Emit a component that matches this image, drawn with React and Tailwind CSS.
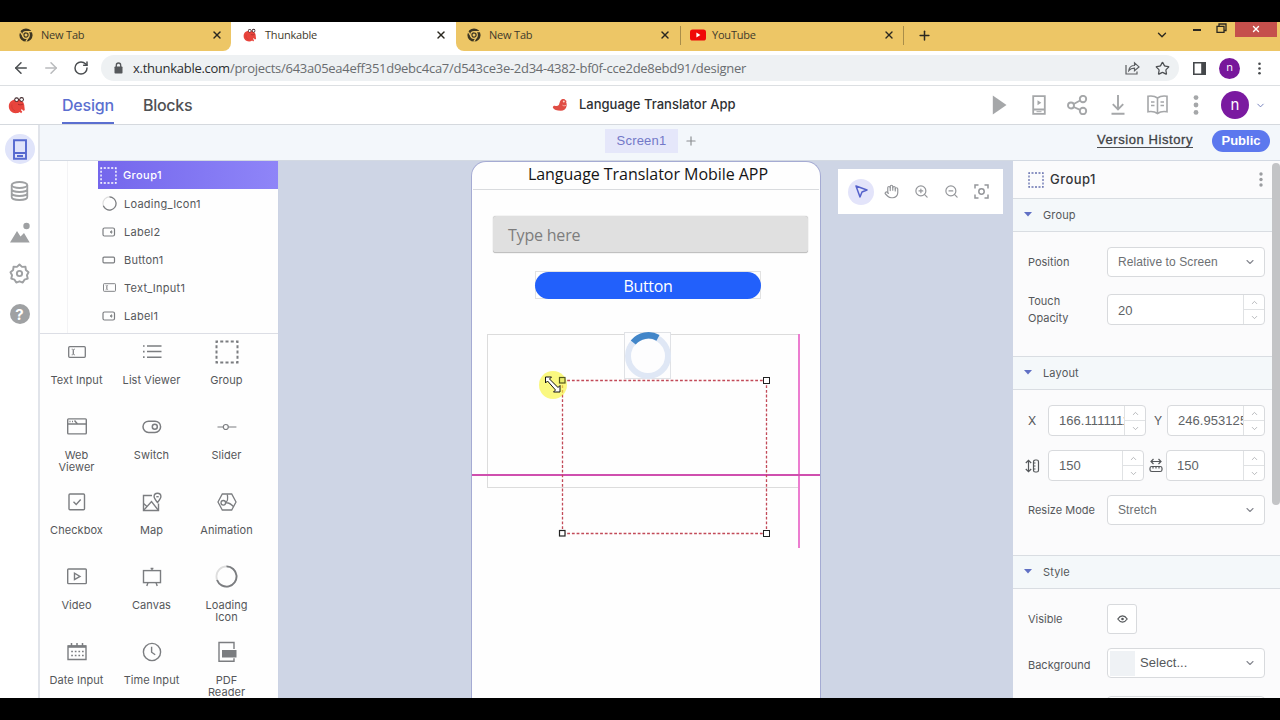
import React from 'react';
import {
  ArrowLeft, ArrowRight, RotateCw, X, Plus, ChevronDown, ChevronUp, Star,
  ZoomIn, ZoomOut, Hand,
} from 'lucide-react';

function Svg({ w, h, box, className = '', children, sw = 1.3 }) {
  return (
    <svg width={w} height={h} viewBox={box || `0 0 ${w} ${h}`} fill="none" stroke="currentColor" strokeWidth={sw} className={`shrink-0 ${className}`}>
      {children}
    </svg>
  );
}

/* ---------- logos ---------- */
const ChromeLogo = () => (
  <Svg w={14} h={14} sw={1.2} className="text-[#3d3622]">
    <circle cx="7" cy="7" r="6.6" fill="currentColor" stroke="none" />
    <circle cx="7" cy="7" r="3.3" stroke="#edc666" />
    <circle cx="7" cy="7" r="1.5" fill="#edc666" stroke="none" />
    <path d="M7 3.7H13M4.2 8.7L1.2 3.6M9.8 8.7L6.8 13.6" stroke="#edc666" />
  </Svg>
);

const Beaver = ({ size }) => (
  <Svg w={size} h={size} box="0 0 18 18">
    <path d="M9 3.2C4 3.2.8 6.2.8 10.2c0 4 3 7 7 7 1.600 0 3-.4 4-1.200l1.300 1.200 1.200-1.400-1.300-1.600.8-1.200 1.400 1.800 1.600-.6-.4-3.400c.2-4.200-2.600-7.600-7.400-7.600z" fill="#e8443c" stroke="none" />
    <path d="M4 8.500c-.8 2.800.6 5.500 3 6.300" stroke="#d63a35" strokeWidth="1" />
    <circle cx="8.600" cy="3.600" r="2.300" fill="#3b2226" stroke="none" />
    <circle cx="13.600" cy="3.400" r="2.300" fill="#3b2226" stroke="none" />
    <circle cx="8.600" cy="3.800" r="1.400" fill="#fff" stroke="none" />
    <circle cx="13.600" cy="3.600" r="1.400" fill="#fff" stroke="none" />
    <path d="M10 8.200c1.600.8 3.600.8 5-.2" stroke="#a12a2b" strokeWidth=".9" />
  </Svg>
);

const AppLogo = () => (
  <Svg w={16} h={14}>
    <path d="M8.700 2.200C10 .6 12.800.6 13.500 2.200c1 .3 1.200 1.200.6 2 .6 1 .7 2.400.5 3.700-.4 3-2.800 4.800-5.800 4.800-4 0-7-1.100-8-3.300.2-1.400 1.200-1.900 2.700-1.500 1.400.2 2.500 0 3.300-.8C7.300 6 7.600 4 8.700 2.200z" fill="#e04d44" stroke="none" />
    <circle cx="11.800" cy="3.600" r="1" fill="#fbd3c8" stroke="none" />
    <path d="M10.500 7.200c1.200.8 2.400.8 3.600 0" stroke="#fbd3c8" strokeWidth=".8" />
  </Svg>
);

const YouTube = () => (
  <Svg w={16} h={12}>
    <rect x="0" y=".5" width="16" height="11" rx="2.600" fill="#f00808" stroke="none" />
    <path d="M6.400 3.600v4.800L10.400 6z" fill="#fff" stroke="none" />
  </Svg>
);

/* ---------- component icons ---------- */
const GroupIcon = ({ size = 24, sw = 2 }) => (
  <Svg w={size} h={size} box="0 0 24 24" sw={sw}>
    <rect x="1.500" y="1.500" width="21" height="21" strokeDasharray="3 2.250" strokeDashoffset="1.500" />
  </Svg>
);
const LoadingIcon = ({ size = 23 }) => (
  <Svg w={size} h={size} box="0 0 24 24" sw={1.9}>
    <circle cx="12" cy="12" r="10.500" stroke="#dedede" />
    <path d="M12 1.500A10.500 10.500 0 1 1 2.130 15.600" />
  </Svg>
);
const LabelIcon = () => (
  <Svg w={14} h={10} sw={1.2}>
    <rect x="1" y="1" width="11.500" height="8" rx="1.500" />
    <path d="M9.600 3.600L8 5l1.600 1.400zM9 5h1.800" fill="currentColor" strokeWidth=".6" />
  </Svg>
);
const ButtonIcon = () => (
  <Svg w={14} h={8} sw={1.2}><rect x="1" y="1.200" width="11.500" height="5.600" rx="1" /></Svg>
);
const TextInputIcon = ({ w = 18, h = 12 }) => (
  <Svg w={w} h={h} box="0 0 18 12" sw={1.3}>
    <rect x=".7" y=".7" width="16.600" height="10.600" rx="1" />
    <path d="M3.700 3.200c1 0 1.600.3 1.600.9v3.800c0 .6-.6.900-1.600.9M7 3.200c-1 0-1.700.3-1.700.9v3.800c0 .6.700.9 1.700.9" strokeWidth=".9" />
  </Svg>
);
const ListIcon = () => (
  <Svg w={20} h={16} sw={1.5}>
    <path d="M5 2h14.500M5 7.600h14.500M5 13.200h14.500" />
    <path d="M1 2h1.600M1 7.600h1.600M1 13.200h1.600" strokeWidth="1.700" />
  </Svg>
);
const WebIcon = () => (
  <Svg w={20} h={17} sw={1.4}>
    <rect x=".7" y=".9" width="18.600" height="15" rx=".8" />
    <path d="M.7 6h18.600M7.500 2.500l3 3.500" />
    <path d="M2.500 3.500h1M5 3.500h1" />
  </Svg>
);
const SwitchIcon = () => (
  <Svg w={20} h={14} sw={1.5}>
    <rect x="1" y="1.200" width="17.600" height="11.200" rx="5.600" />
    <circle cx="12.800" cy="6.800" r="2.500" />
  </Svg>
);
const SliderIcon = () => (
  <Svg w={20} h={8} sw={1.2}><path d="M.5 4h5.800M11.400 4h8" /><circle cx="8.800" cy="4" r="2.500" /></Svg>
);
const CheckIcon = () => (
  <Svg w={18} h={18} sw={1.4}><rect x="1" y="1" width="15.500" height="15.800" rx="1" /><path d="M5.500 8.800l2.700 2.700 4.500-5" /></Svg>
);
const MapIcon = () => (
  <Svg w={20} h={20} sw={1.4}>
    <path d="M10 3.500H1.500v15h15v-7" />
    <path d="M1.500 18.500l8-9 7 9M1.500 11.500l3.500 3" />
    <path d="M15.500 10.500c-2-2.400-3.400-4-3.400-5.900a3.400 3.400 0 0 1 6.800 0c0 1.900-1.400 3.500-3.400 5.900z" fill="#fff" />
    <path d="M14.300 4.700h2.400" />
  </Svg>
);
const AnimationIcon = () => (
  <Svg w={20} h={18} sw={1.3}>
    <path d="M5.300 1h9.400L19 9l-4.300 8H5.300L1 9z" />
    <circle cx="6.300" cy="9.800" r="2.300" />
    <path d="M8.500 9.500c2-1 2.600-4 1.800-8M8.500 9.800c3-.3 6 1.500 8.200 4" />
  </Svg>
);
const VideoIcon = () => (
  <Svg w={20} h={17} sw={1.4}><rect x=".7" y="1" width="18.600" height="14.600" rx=".8" /><path d="M7.500 5.200v6.400l5.500-3.200z" /></Svg>
);
const CanvasIcon = () => (
  <Svg w={20} h={20} sw={1.4}>
    <rect x="1.500" y="3.600" width="17" height="12" />
    <path d="M10 3.600V1.200M8.600 1.500h2.800M6 15.600L4.800 19M14 15.600l1.200 3.400" />
  </Svg>
);
const DateIcon = () => (
  <Svg w={20} h={18} sw={1.4}>
    <path d="M1 3h18v13.500H1z" />
    <path d="M1 3.600h18" strokeWidth="2.400" />
    <path d="M4.500 0v3M10 0v3M15.500 0v3" strokeWidth="1.500" />
    <path d="M4.200 8.500h12.500M4.200 12.500h12.500" strokeWidth="1.700" strokeDasharray="1.700 1.900" />
  </Svg>
);
const TimeIcon = () => (
  <Svg w={20} h={20} sw={1.4}><circle cx="10" cy="10" r="8.600" /><path d="M9.600 4.800v5.400l3.600 2.600" /></Svg>
);
const PdfIcon = () => (
  <Svg w={20} h={22} sw={1.4}>
    <path d="M17 8V1.500H2v18.800h15v-3" />
    <rect x="5" y="9" width="14.500" height="7.500" fill="currentColor" stroke="none" />
  </Svg>
);

const COMPONENTS = [
  ['Text Input', <TextInputIcon />], ['List Viewer', <ListIcon />], ['Group', <GroupIcon />],
  ['Web Viewer', <WebIcon />], ['Switch', <SwitchIcon />], ['Slider', <SliderIcon />],
  ['Checkbox', <CheckIcon />], ['Map', <MapIcon />], ['Animation', <AnimationIcon />],
  ['Video', <VideoIcon />], ['Canvas', <CanvasIcon />], ['Loading Icon', <LoadingIcon />],
  ['Date Input', <DateIcon />], ['Time Input', <TimeIcon />], ['PDF Reader', <PdfIcon />],
];

const TREE = [
  ['Loading_Icon1', <LoadingIcon size={15} />],
  ['Label2', <LabelIcon />],
  ['Button1', <ButtonIcon />],
  ['Text_Input1', <TextInputIcon w={13} h={9} />],
  ['Label1', <LabelIcon />],
];

/* ---------- browser chrome ---------- */
function Tab({ icon, title, active, className = '' }) {
  return (
    <div className={`flex h-[29px] shrink-0 items-center pb-[3px] text-[#3f3a2b] ${active ? 'bg-white' : 'bg-[#edc666]'} ${className}`}>
      <span className="flex w-[22px]">{icon}</span>
      <span className="grow text-[11px] leading-4 tracking-[-0.2px]">{title}</span>
      <X size={12} strokeWidth={2.8} className="text-[#2b2820]" />
    </div>
  );
}

function BrowserChrome() {
  return (
    <header className="font-['Open_Sans',sans-serif]">
      <div className="flex h-[29px] items-center bg-white">
        <Tab icon={<ChromeLogo />} title="New Tab" className="w-[231px] rounded-br-lg pl-[19px] pr-[8px]" />
        <Tab icon={<Beaver size={14} />} title="Thunkable" active className="w-[225px] pl-[12px] pr-[9px]" />
        <Tab icon={<ChromeLogo />} title="New Tab" className="w-[224px] rounded-bl-lg pl-[11px] pr-[9px]" />
        <div className="flex h-[29px] items-center bg-[#edc666] pb-[3px]"><div className="h-[19px] w-px bg-[#a98d49]" /></div>
        <Tab icon={<YouTube />} title="YouTube" className="w-[222px] pl-[9px] pr-[8px]" />
        <div className="flex h-[29px] grow items-start bg-[#edc666]">
          <div className="mt-[4px] h-[19px] w-px bg-[#a98d49]" />
          <Plus size={15} strokeWidth={2.400} className="ml-[13px] mt-[6px] text-[#2b2820]" />
          <div className="grow" />
          <ChevronDown size={14} strokeWidth={2.300} className="mt-[6px] text-[#2b2820]" />
          <div className="ml-[24px] mt-[7px] h-[2px] w-[8px] bg-[#2b2820]" />
          <Svg w={11} h={11} className="ml-[15px] mt-px text-[#2b2820]">
            <path d="M1 3.300h7v6H1zM3 3V1h7v6.500H8.500" />
          </Svg>
          <div className="ml-[8px] mr-[3px] flex h-[15px] w-[42px] items-center justify-center bg-[#c5504c]">
            <X size={10} strokeWidth={3.200} className="mb-[2px] text-white" />
          </div>
        </div>
      </div>
      <div className="flex h-[35px] items-center border-b border-[#dcdfe2] bg-white">
        <ArrowLeft size={18} className="ml-[12px] text-[#4a4d50]" />
        <ArrowRight size={18} className="ml-[12px] text-[#b9bbbd]" />
        <RotateCw size={16} strokeWidth={2.200} className="ml-[13px] text-[#4a4d50]" />
        <div className="ml-[12px] flex h-[26px] w-[1078px] items-center rounded-full bg-[#eef1f3] pl-[13px] pr-[9px]">
          <Svg w={9} h={12} className="text-[#55585b]">
            <rect x=".5" y="4.500" width="8" height="7" rx=".8" fill="currentColor" stroke="none" />
            <path d="M2.300 5V3.200a2.200 2.200 0 0 1 4.400 0V5" />
          </Svg>
          <span className="ml-[10px] grow whitespace-nowrap text-[13px] leading-5 tracking-[-0.265px] text-[#6a6d70]">
            <span className="text-[#2c2e30]">x.thunkable.com</span>/projects/643a05ea4eff351d9ebc4ca7/d543ce3e-2d34-4382-bf0f-cce2de8ebd91/designer
          </span>
          <Svg w={15} h={14} sw={1.2} className="mr-[15px] text-[#5c5f62]">
            <path d="M1 4v9h11v-2.500" />
            <path d="M3.800 9.500c.5-3.300 2.500-5 5.700-5V1.800L14 5.900l-4.500 3.900V7.200c-2.500 0-4.300.6-5.700 2.300z" />
          </Svg>
          <Star size={15} strokeWidth={2} className="text-[#4c4f52]" />
        </div>
        <Svg w={13} h={13} sw={1.600} className="ml-[14px] text-[#45484b]">
          <path d="M.8.8h11.400v11.400H.8z" /><path d="M9 .8h3.200v11.400H9z" fill="currentColor" />
        </Svg>
        <div className="ml-[13px] flex size-[21px] items-center justify-center rounded-full bg-[#77179b] pb-px text-[11px] text-white">n</div>
        <Svg w={3} h={13} className="ml-[18px] text-[#45484b]">
          <g fill="currentColor" stroke="none"><circle cx="1.500" cy="1.800" r="1.300" /><circle cx="1.500" cy="6.500" r="1.300" /><circle cx="1.500" cy="11.200" r="1.300" /></g>
        </Svg>
      </div>
    </header>
  );
}

/* ---------- app header ---------- */
const Cell = ({ w, children }) => <div className={`flex shrink-0 items-center justify-center ${w}`}>{children}</div>;

function AppHeader() {
  return (
    <div className="flex h-[39px] items-center border-b border-[#d5d9de] bg-white">
      <div className="ml-[8px] w-[54px]"><Beaver size={18} /></div>
      <div className="flex h-[38px] w-[52px] items-center border-b-2 border-[#5b6fd0] pt-px text-[16px] font-medium tracking-[-0.190px] text-[#5b6fd0]">Design</div>
      <div className="ml-[29px] w-[409px] text-[16px] font-medium tracking-[-0.3px] text-[#4f5154]">Blocks</div>
      <AppLogo />
      <div className="ml-[11px] w-[400px] whitespace-nowrap text-[13px] font-medium text-[#2e3033]">Language Translator App</div>
      <div className="flex items-center text-[#a5a7a9]">
        <Cell w="w-[40px]"><Svg w={15} h={20}><path d="M.8.500v19L14.500 10z" fill="currentColor" stroke="none" /></Svg></Cell>
        <Cell w="w-[40px]"><Svg w={14} h={20} sw={1.800}><path d="M1.200 1.200h11.600v17.600H1.200zM1.200 14.500h11.600" /><path d="M5.500 5.300v5L9.300 7.800z" fill="currentColor" stroke="none" /><path d="M4.500 16.700h5" strokeWidth="1" /></Svg></Cell>
        <Cell w="w-[37px]"><Svg w={21} h={20} sw={1.900}><circle cx="4" cy="10.500" r="3" /><circle cx="16" cy="4" r="3.200" /><circle cx="16" cy="16" r="3.200" /><path d="M6.700 9l6.400-3.500M6.700 12l6.400 2.800" /></Svg></Cell>
        <Cell w="w-[43px]"><Svg w={14} h={20} sw={1.900}><path d="M7 0v14M1.800 9.200L7 14.500l5.200-5.300M.500 18.800h13" /></Svg></Cell>
        <Cell w="w-[37px]"><Svg w={21} h={20} sw={1.600}><path d="M10.500 3C7.500.700 4 .700 1 1.200v15.600c3-.5 6.500-.5 9.500 1.700 3-2.200 6.500-2.200 9.500-1.700V1.200C17 .700 13.500.700 10.500 3zM10.500 3v15.500" /><path d="M4 7h3.500M4 10.500h3.500M13.500 7H17M13.500 10.500H17" /></Svg></Cell>
        <Cell w="w-[40px]"><Svg w={6} h={20}><g fill="currentColor" stroke="none"><circle cx="3" cy="2.600" r="2.400" /><circle cx="3" cy="10" r="2.400" /><circle cx="3" cy="17.400" r="2.400" /></g></Svg></Cell>
        <Cell w="w-[38px]"><div className="flex size-[28px] items-center justify-center rounded-full bg-[#7a1aa0] pb-px text-[15px] leading-none text-white">n</div></Cell>
        <Cell w="w-[12px]"><ChevronDown size={11} className="text-[#6b78b8]" /></Cell>
      </div>
    </div>
  );
}

function ScreenBar() {
  return (
    <div className="flex h-[36px] items-center border-b border-[#d3d9e2] bg-[#f3f7fb] pb-[5px] pt-px">
      <div className="ml-[565px] flex h-[24px] w-[73px] items-center justify-center bg-[#e5e7fa] font-['Liberation_Sans',sans-serif] text-[13px] tracking-[0.2px] text-[#7378c8]">Screen1</div>
      <Plus size={14} className="ml-[6px] text-[#8b8e92]" />
      <div className="grow" />
      <div className="mr-[19px] border-b border-[#4b4e51] font-['Liberation_Sans',sans-serif] text-[13px] leading-[14px] tracking-[0.570px] text-[#3f4245] [-webkit-text-stroke:0.3px_#3f4245]">Version History</div>
      <div className="mr-[10px] flex h-[22px] w-[58px] items-center justify-center rounded-full bg-[#5c78ee] font-['Liberation_Sans',sans-serif] text-[13px] font-bold text-white">Public</div>
    </div>
  );
}

/* ---------- left side ---------- */
function Rail() {
  return (
    <nav className="flex w-[40px] shrink-0 flex-col items-center border-r-2 border-[#e1e4ea] bg-white pl-px text-[#9fa1a3]">
      <div className="mt-[9px] flex size-[30px] items-center justify-center rounded-full bg-[#e0e4fa] text-[#5468cf]">
        <Svg w={14} h={21} sw={1.900}><path d="M1 1.200h12v18.600H1zM1 14h12M4 17h6" /></Svg>
      </div>
      <Svg w={19} h={20} sw={1.800} className="mt-[17px]">
        <ellipse cx="9.500" cy="4" rx="7.800" ry="3" /><path d="M1.700 4v12c0 1.700 3.500 3 7.800 3s7.800-1.300 7.800-3V4M1.700 8c0 1.700 3.500 3 7.800 3s7.800-1.300 7.800-3M1.700 12c0 1.700 3.500 3 7.800 3s7.800-1.300 7.800-3" />
      </Svg>
      <Svg w={20} h={21} className="mt-[21px]"><path d="M0 20.500L7 9l3.500 5.500L14 11l5.700 9.500z" fill="currentColor" stroke="none" /><circle cx="16.500" cy="4" r="3.200" fill="currentColor" stroke="none" /></Svg>
      <Svg w={21} h={21} box="0 0 24 24" sw={2.200} className="mt-[20px]">
        <path d="M12 1.800l2.900 2.600 3.900-.2.500 3.800 3 2.500-1.800 3.500.9 3.800-3.700 1.300-2 3.300L12 20.900l-3.700 1.500-2-3.300-3.700-1.300.9-3.800L1.700 10.500l3-2.500.5-3.800 3.900.200z" strokeLinejoin="round" />
        <circle cx="12" cy="12" r="3" />
      </Svg>
      <div className="mt-[20px] flex size-[20px] items-center justify-center rounded-full bg-[#9fa1a3] text-[15px] font-bold leading-none text-white">?</div>
    </nav>
  );
}

function SidePanel() {
  return (
    <aside className="flex w-[239px] shrink-0 flex-col border-r border-[#ccd3e4] bg-[#fefefe] text-[#55575a]">
      <div className="flex h-[173px] shrink-0 border-b border-[#dcdee5]">
        <div className="w-[28px] border-r border-[#f3f3f5]" />
        <div className="ml-[30px] grow text-[11px]">
          <div className="flex h-[28px] items-center bg-linear-to-r from-[#7466ec] to-[#8f85f8] pt-px font-medium tracking-[0.4px] text-white">
            <span className="ml-[2px] flex w-[23px]"><GroupIcon size={17} sw={2} /></span>Group1
          </div>
          {TREE.map(([label, icon]) => (
            <div key={label} className="flex h-[28px] items-center pt-[2px] tracking-[0.250px]">
              <span className="ml-[3px] flex w-[16px] justify-center pb-px text-[#7b7d80]">{icon}</span><span className="ml-[7px]">{label}</span>
            </div>
          ))}
        </div>
      </div>
      <div className="-ml-px grid grid-cols-3 pr-[14px] text-[11px] leading-[12px]">
        {COMPONENTS.map(([label, icon]) => (
          <div key={label} className="flex h-[75px] flex-col items-center text-[#7b7d80]">
            <div className="flex h-[35px] items-center justify-center">{icon}</div>
            <div className="mt-[5px] whitespace-nowrap text-center tracking-[0.050px] text-[#55575a]">
              {['Web Viewer', 'Loading Icon', 'PDF Reader'].includes(label)
                ? label.split(' ').map((t) => <div key={t}>{t}</div>)
                : label}
            </div>
          </div>
        ))}
      </div>
    </aside>
  );
}

/* ---------- design canvas ---------- */
function Handles() {
  return (
    <svg width="232" height="172" className="absolute left-[64px] top-[206px]">
      <g fill="none" stroke="#c24a58" strokeWidth="1.300" strokeDasharray="2.800 1.900">
        <path d="M26.500 12.500H231M26.500 165.500H231M26.500 12.500V165.500M230.500 12.500V165.500" />
      </g>
      <circle cx="17" cy="17" r="14" fill="#f7f43c" fillOpacity=".65" />
      <g fill="#fff" stroke="#222" strokeWidth="1.200">
        <rect x="23.500" y="9.500" width="5.500" height="5.500" fill="#e9ec6a" stroke="#55591f" />
        <rect x="23.500" y="162.500" width="5.500" height="5.500" />
      </g>
      <path d="M9.500 9h6l-2 2 8.500 8.500 2-2v6.500h-6.500l2-2L11.500 13l-2 2z" fill="#fff" stroke="#111" strokeWidth="1" />
    </svg>
  );
}

function Phone() {
  return (
    <div className="relative w-[350px] shrink-0 overflow-hidden rounded-t-[15px] border border-b-0 border-[#a5abd3] bg-[#fefefe] font-['Open_Sans',sans-serif]">
      <div className="mx-px flex h-[28px] items-start justify-center border-b border-[#d9dbde] pl-[4px] text-[16px] leading-[24px] tracking-[-0.040px] text-[#151515]">Language Translator Mobile APP</div>
      <div className="absolute left-[21px] top-[54px] flex h-[37px] w-[315px] items-center rounded-[3px] border-b border-[#c0c0c0] bg-[#e0e0e0] pl-[15px] pt-[2px] text-[16px] tracking-[-0.200px] text-[#7d7d7d] shadow-[0_0_1px_#999]">Type here</div>
      <div className="absolute left-[63px] top-[109px] border border-[#e2e2e2]">
        <div className="-mx-px -mb-px flex h-[27px] w-[226px] items-center justify-center rounded-full bg-[#2260fb] pt-px text-[16px] tracking-[-0.300px] text-white">Button</div>
      </div>
      <div className="absolute left-[15px] top-[172px] h-[154px] w-[313px] border border-[#dcdcdc]" />
      <div className="absolute left-[152px] top-[170px] h-[47px] w-[47px] border border-[#e0e2e6] bg-[#fdfdfe]">
        <svg width="47" height="47" className="absolute -left-px -top-px" fill="none" strokeWidth="6">
          <circle cx="24" cy="24" r="20" stroke="#dfe7f5" />
          <path d="M9.200 10.500A20 20 0 0 1 34 5.800" stroke="#4286c9" strokeWidth="6.500" />
        </svg>
      </div>
      <div className="absolute left-[326px] top-[172px] h-[214px] w-[2px] bg-[#ec7dd0]" />
      <div className="absolute left-0 top-[312px] h-[1.500px] w-[348px] bg-[#cf4fae]" />
      <Handles />
      <div className="absolute left-[291px] top-[215px] size-[7px] border border-[#222] bg-white" />
      <div className="absolute left-[291px] top-[368px] size-[7px] border border-[#222] bg-white" />
    </div>
  );
}

function Canvas() {
  return (
    <main className="relative flex w-[734px] shrink-0 justify-center bg-[#ced5e5]">
      <Phone />
      <div className="absolute right-[10px] top-[8px] flex h-[45px] w-[165px] items-center justify-center bg-white pl-px text-[#94969a]">
        <Cell w="w-[30px]"><div className="flex size-[26px] shrink-0 items-center justify-center rounded-full bg-[#e3e4fa] text-[#5562cb]"><Svg w={13} h={13} sw={1.500}><path d="M1 1l11 4-5 2-2 5z" strokeLinejoin="round" /></Svg></div></Cell>
        <Cell w="w-[30px]"><Hand size={15} strokeWidth={1.900} /></Cell>
        <Cell w="w-[30px]"><ZoomIn size={15} strokeWidth={1.900} /></Cell>
        <Cell w="w-[30px]"><ZoomOut size={15} strokeWidth={1.900} /></Cell>
        <Cell w="w-[30px]"><Svg w={15} h={15} sw={1.500}><path d="M1 4.500V1h3.500M10.500 1H14v3.500M14 10.500V14h-3.500M4.500 14H1v-3.500" /><circle cx="7.500" cy="7.500" r="2.700" /></Svg></Cell>
      </div>
    </main>
  );
}

/* ---------- properties ---------- */
const Section = ({ title, h, children }) => (
  <section className={h}>
    <div className="flex h-[33px] items-center border-b border-[#d9dde2] bg-[#f4f8fa] pl-[11px] pt-px text-[11px] tracking-[0.150px]">
      <Svg w={8} h={5} className="mb-[2px] mr-[11px] text-[#6070c4]"><path d="M0 0h8L4 4.500z" fill="currentColor" stroke="none" /></Svg>
      {title}
    </div>
    {children}
  </section>
);

const Select = ({ children }) => (
  <div className="flex h-[30px] w-[158px] items-center justify-between rounded-[4px] border border-[#d8dadd] bg-white pl-[10px] pr-[8px] text-[12px] text-[#6d7073]">
    <span className="pb-px font-['Liberation_Sans',sans-serif] tracking-[0.100px]">{children}</span>
    <ChevronDown size={12} strokeWidth={2.200} className="text-[#85878f]" />
  </div>
);

const NumberBox = ({ value, w, className = '' }) => (
  <div className={`flex h-[31px] shrink-0 overflow-hidden rounded-[4px] border border-[#d8dadd] bg-white text-[#606366] ${w} ${className}`}>
    <div className="flex min-w-0 grow items-center overflow-hidden pl-[10px] pt-px font-['Liberation_Sans',sans-serif] text-[13px] tracking-[0.050px]">{value}</div>
    <div className="flex w-[21px] shrink-0 flex-col border-l border-[#e0e2e4] text-[#a2a4a8]">
      <div className="flex h-[15px] items-center justify-center border-b border-[#e0e2e4]"><ChevronUp size={9} /></div>
      <div className="flex grow items-center justify-center"><ChevronDown size={9} /></div>
    </div>
  </div>
);

const Row = ({ label, className = '', children }) => (
  <div className={`flex items-center pl-[15px] ${className}`}>
    <div className="w-[79px] whitespace-nowrap pt-px">{label}</div>
    {children}
  </div>
);

function Properties() {
  return (
    <aside className="relative flex w-[267px] shrink-0 flex-col overflow-hidden bg-[#fbfbfc] text-[11px] text-[#55585b]">
      <div className="flex h-[38px] shrink-0 items-center border-b border-[#d9dde2] pl-[15px] text-[13px] font-medium tracking-[0.450px] text-[#333538]">
        <span className="mr-[6px] text-[#6873b0]"><GroupIcon size={16} sw={2} /></span>
        <span className="grow">Group1</span>
        <Svg w={4} h={15} className="mr-[17px] text-[#9b9da0]"><g fill="currentColor" stroke="none"><circle cx="2" cy="2" r="1.700" /><circle cx="2" cy="7.500" r="1.700" /><circle cx="2" cy="13" r="1.700" /></g></Svg>
      </div>
      <Section title="Group" h="h-[158px] shrink-0 border-b border-[#d9dde2]">
        <Row label="Position" className="mt-[15px]"><Select>Relative to Screen</Select></Row>
        <Row className="mt-[15px] leading-[17px]" label={<>Touch<br />Opacity</>}><NumberBox value="20" w="w-[158px]" /></Row>
      </Section>
      <Section title="Layout" h="h-[199px] shrink-0 border-b border-[#d9dde2]">
        <div className="mt-[15px] flex items-center pl-[15px] text-[12px]">
          <span className="w-[20px]">X</span>
          <NumberBox value="166.1111111" w="w-[98px]" />
          <span className="ml-[8px] w-[13px]">Y</span>
          <NumberBox value="246.953125" w="w-[98px]" />
        </div>
        <div className="mt-[14px] flex items-center pl-[12px]">
          <Svg w={15} h={14} sw={1.200} className="mr-[8px]">
            <path d="M3.500 1.500v11M.8 4l2.700-2.700L6.200 4M.8 10l2.700 2.700L6.200 10" /><rect x="8.500" y="1" width="5" height="12" rx="1.800" /><path d="M8.500 4h2M8.500 7h2M8.500 10h2" />
          </Svg>
          <NumberBox value="150" w="w-[96px]" />
          <Svg w={14} h={15} sw={1.200} className="ml-[5px] mr-[3px]">
            <path d="M2 3.500h10M4.500 1L2 3.500 4.500 6M9.500 1L12 3.500 9.500 6" /><rect x="1" y="8.500" width="12" height="5" rx="1.800" /><path d="M4 8.500v2M7 8.500v2M10 8.500v2" />
          </Svg>
          <NumberBox value="150" w="w-[99px]" />
        </div>
        <Row label="Resize Mode" className="mt-[14px]"><Select>Stretch</Select></Row>
      </Section>
      <Section title="Style" h="shrink-0">
        <Row label="Visible" className="mt-[15px]">
          <div className="flex size-[30px] items-center justify-center rounded-[3px] border border-[#d8dadd] bg-white">
            <Svg w={11} h={8} sw={1.200}><path d="M.8 4C2.300 1.800 3.700.9 5.500.9S8.700 1.800 10.200 4C8.700 6.200 7.300 7.100 5.500 7.100S2.300 6.200.8 4z" /><circle cx="5.500" cy="4" r="1.300" fill="currentColor" stroke="none" /></Svg>
          </div>
        </Row>
        <Row label={<div className="pt-[3px]">Background</div>} className="mt-[14px]">
          <div className="flex h-[30px] w-[158px] items-center rounded-[4px] border border-[#d8dadd] bg-white pl-[2px] pr-[8px]">
            <div className="size-[25px] bg-[#eff2f5]" />
            <span className="ml-[5px] grow font-['Liberation_Sans',sans-serif] text-[13px] tracking-[0.050px]">Select...</span>
            <ChevronDown size={12} strokeWidth={2.200} className="text-[#85878f]" />
          </div>
        </Row>
        <Row label="" className="mt-[18px]"><div className="h-[30px] w-[158px] rounded-[4px] border border-[#d8dadd] bg-white" /></Row>
      </Section>
      <div className="absolute right-0 top-[2px] h-[342px] w-[8px] rounded-full bg-[#c3c4c6]" />
    </aside>
  );
}

export default function App() {
  return (
    <div className="flex h-[720px] w-[1280px] flex-col overflow-hidden bg-black py-[22px] font-['Inter',sans-serif]">
      <BrowserChrome />
      <AppHeader />
      <div className="flex h-[573px] bg-white">
        <Rail />
        <div className="flex w-[1240px] flex-col">
          <ScreenBar />
          <div className="flex h-[537px] overflow-hidden">
            <SidePanel />
            <Canvas />
            <Properties />
          </div>
        </div>
      </div>
    </div>
  );
}
